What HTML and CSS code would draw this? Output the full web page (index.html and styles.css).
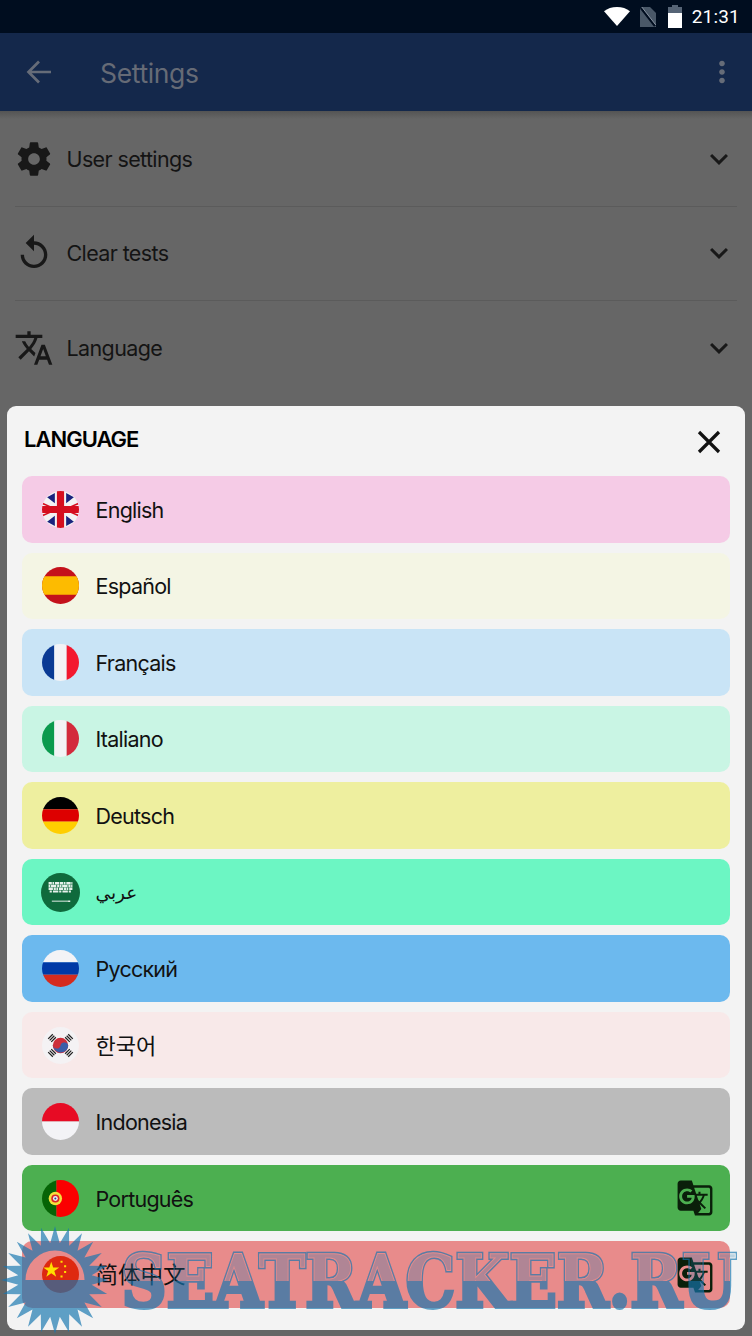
FILE: index.html
```html
<!DOCTYPE html>
<html lang="en">
<head>
<meta charset="UTF-8">
<meta name="viewport" content="width=device-width, initial-scale=1.0">
<title>Settings</title>
<link rel="stylesheet" href="styles.css">
</head>
<body>

<div class="statusbar">
  <svg class="st-wifi" viewBox="0 0 26 19"><path d="M13 19 0 4.200C3.400 1.600 8 0 13 0s9.600 1.600 13 4.200z"/></svg>
  <svg class="st-sim" viewBox="0 0 16 20"><path d="M2 0h8l6 6v14H0V2z" fill="#4a5868"/><path d="M1 1l14 18" stroke="#000d1f" stroke-width="2.400"/><path d="M1.800 0l14 18" stroke="#8994a2" stroke-width="1"/></svg>
  <svg class="st-batt" viewBox="0 0 14 23"><path d="M4 0h6v2h4v21H0V2h4z" fill="#566476"/><path d="M0 8h14v15H0z" fill="#fff"/></svg>
  <span class="st-time">21:31</span>
</div>

<div class="appbar">
  <svg class="ab-back" viewBox="0 0 24 24"><path d="M20 12H5M12 5l-7 7 7 7"/></svg>
  <span class="ab-title">Settings</span>
  <svg class="ab-more" viewBox="0 0 24 24"><path d="M12 8c1.100 0 2-.9 2-2s-.9-2-2-2-2 .9-2 2 .9 2 2 2zm0 2c-1.100 0-2 .9-2 2s.9 2 2 2 2-.9 2-2-.9-2-2-2zm0 6c-1.100 0-2 .9-2 2s.9 2 2 2 2-.9 2-2-.9-2-2-2z"/></svg>
</div>

<div class="settings">
  <div class="set-row">
    <svg class="set-icon" viewBox="0 0 24 24"><path d="M19.430 12.980c.04-.32.07-.64.07-.98s-.03-.66-.07-.98l2.110-1.650c.19-.15.24-.42.12-.64l-2-3.460c-.12-.22-.39-.3-.61-.22l-2.490 1c-.52-.4-1.080-.73-1.690-.98l-.38-2.650C14.460 2.180 14.250 2 14 2h-4c-.25 0-.46.18-.49.42l-.38 2.650c-.61.25-1.170.59-1.690.98l-2.490-1c-.23-.09-.49 0-.61.22l-2 3.460c-.13.22-.07.49.12.64l2.110 1.650c-.04.32-.07.65-.07.98s.03.66.07.98l-2.110 1.650c-.19.15-.24.42-.12.64l2 3.460c.12.22.39.3.61.22l2.490-1c.52.4 1.080.73 1.690.98l.38 2.650c.03.24.24.42.49.42h4c.25 0 .46-.18.49-.42l.38-2.650c.61-.25 1.170-.59 1.690-.98l2.490 1c.23.09.49 0 .61-.22l2-3.460c.12-.22.07-.49-.12-.64l-2.110-1.650zM12 15.500c-1.930 0-3.500-1.570-3.500-3.500s1.570-3.500 3.500-3.500 3.500 1.570 3.500 3.500-1.570 3.500-3.500 3.500z"/></svg>
    <span class="set-name">User settings</span>
    <svg class="set-chev" viewBox="0 0 24 24"><path d="M16.590 8.590 12 13.170 7.410 8.590 6 10l6 6 6-6z"/></svg>
  </div>
  <div class="set-row">
    <svg class="set-icon" viewBox="0 0 24 24"><path d="M12 5V1L7 6l5 5V7c3.310 0 6 2.690 6 6s-2.690 6-6 6-6-2.690-6-6H4c0 4.420 3.580 8 8 8s8-3.580 8-8-3.580-8-8-8z"/></svg>
    <span class="set-name">Clear tests</span>
    <svg class="set-chev" viewBox="0 0 24 24"><path d="M16.590 8.590 12 13.170 7.410 8.590 6 10l6 6 6-6z"/></svg>
  </div>
  <div class="set-row">
    <svg class="set-icon" viewBox="0 0 24 24"><path d="M12.870 15.070l-2.540-2.510.03-.03c1.740-1.940 2.980-4.170 3.710-6.530H17V4h-7V2H8v2H1v1.990h11.170C11.500 7.920 10.440 9.750 9 11.350 8.070 10.320 7.300 9.190 6.690 8h-2c.73 1.630 1.730 3.170 2.980 4.560l-5.090 5.020L4 19l5-5 3.110 3.110.76-2.040zM18.500 10h-2L12 22h2l1.120-3h4.750L21 22h2l-4.500-12zm-2.620 7l1.620-4.330L19.120 17h-3.240z"/></svg>
    <span class="set-name">Language</span>
    <svg class="set-chev" viewBox="0 0 24 24"><path d="M16.590 8.590 12 13.170 7.410 8.590 6 10l6 6 6-6z"/></svg>
  </div>
</div>

<div class="sheet">
  <div class="sheet-head">
    <span class="sheet-title">LANGUAGE</span>
    <svg class="sheet-close" viewBox="0 0 24 24"><path d="M2 2l20 20M22 2 2 22"/></svg>
  </div>

  <div class="lang-list">
    <div class="lang c-en">
      <svg class="flag" viewBox="0 0 36 36">
        <rect width="36" height="36" fill="#f3f3f3"/>
        <path d="M5 6l7.500 6V2zM31 6l-7.500 6V2zM5 30l7.500-6v10zM31 30l-7.500-6v10z" fill="#1a237e"/>
        <path d="M0 11l8 3.500H4.500L0 13zM36 25l-8-3.500h3.500L36 23zM0 25l8-3.500H4.500L0 23zM36 11l-8 3.500h3.500L36 13z" fill="#d50f1f"/>
        <path d="M14.500 0h7v14.500H36v7H21.500V36h-7V21.500H0v-7h14.500z" fill="#d50f1f"/>
      </svg>
      <span class="lang-name">English</span>
    </div>
    <div class="lang c-es">
      <svg class="flag" viewBox="0 0 36 36">
        <rect width="36" height="36" fill="#c4111b"/>
        <rect y="9" width="36" height="18" fill="#fdbb00"/>
      </svg>
      <span class="lang-name">Español</span>
    </div>
    <div class="lang c-fr">
      <svg class="flag" viewBox="0 0 36 36">
        <rect width="12" height="36" fill="#0a3a94"/>
        <rect x="12" width="12" height="36" fill="#f3f3f6"/>
        <rect x="24" width="12" height="36" fill="#f3182e"/>
      </svg>
      <span class="lang-name">Français</span>
    </div>
    <div class="lang c-it">
      <svg class="flag" viewBox="0 0 36 36">
        <rect width="12" height="36" fill="#0b9a4e"/>
        <rect x="12" width="12" height="36" fill="#f3f3f6"/>
        <rect x="24" width="12" height="36" fill="#d32a3c"/>
      </svg>
      <span class="lang-name">Italiano</span>
    </div>
    <div class="lang c-de">
      <svg class="flag" viewBox="0 0 36 36">
        <rect width="36" height="12" fill="#000"/>
        <rect y="12" width="36" height="12" fill="#dd0000"/>
        <rect y="24" width="36" height="12" fill="#ffce00"/>
      </svg>
      <span class="lang-name">Deutsch</span>
    </div>
    <div class="lang c-ar">
      <svg class="flag flag-big" viewBox="0 0 36 36">
        <rect width="36" height="36" fill="#0f6a3c"/>
        <path d="M7 9.500h22" stroke="#e6f0ea" stroke-width="2.400" stroke-dasharray="3 .6 1.500 .8 4 .6"/>
        <path d="M7 12h22" stroke="#e6f0ea" stroke-width="2.400" stroke-dasharray="1.500 .6 5 .8 2 .5"/>
        <path d="M7 14.500h22" stroke="#e6f0ea" stroke-width="2.400" stroke-dasharray="4 .7 2 .5 1.500 .8"/>
        <path d="M8 17h20" stroke="#e6f0ea" stroke-width="1.800" stroke-dasharray="2 1 5 .8"/>
        <path d="M10 26h15" stroke="#e6f0ea" stroke-width=".9"/>
        <path d="M25 25.300h2v1.400h-2z" fill="#e6f0ea"/>
      </svg>
      <span class="lang-name lang-name-ar">عربي</span>
    </div>
    <div class="lang c-ru">
      <svg class="flag" viewBox="0 0 36 36">
        <rect width="36" height="12" fill="#f3f3f6"/>
        <rect y="12" width="36" height="12" fill="#0039a6"/>
        <rect y="24" width="36" height="12" fill="#d52b1e"/>
      </svg>
      <span class="lang-name">Русский</span>
    </div>
    <div class="lang c-ko">
      <svg class="flag" viewBox="0 0 36 36">
        <rect width="36" height="36" fill="#f4f2f4"/>
        <circle cx="18" cy="18" r="7.500" fill="#cd2e3a"/>
        <path d="M10.700 16.400a3.700 3.700 0 0 0 7.300 1.600 3.700 3.700 0 0 1 7.300 1.600A7.500 7.500 0 0 1 10.700 16.400z" fill="#3b5ea8"/>
        <path d="M6 11.500l4.500-4.500M7.500 13 12 8.500M9 14.500l4.500-4.500M25.500 7l4.500 4.500M24 8.500l4.500 4.500M22.500 10l4.500 4.500M6 24.500l4.500 4.500M7.500 23l4.500 4.500M9 21.500l4.500 4.500M25.500 29l4.500-4.500M24 27.500l4.500-4.500M22.500 26l4.500-4.500" stroke="#222" stroke-width="1.200"/>
      </svg>
      <span class="lang-name lang-name-cjk">한국어</span>
    </div>
    <div class="lang c-id">
      <svg class="flag" viewBox="0 0 36 36">
        <rect width="36" height="18" fill="#e70b24"/>
        <rect y="18" width="36" height="18" fill="#f3f3f6"/>
      </svg>
      <span class="lang-name">Indonesia</span>
    </div>
    <div class="lang c-pt">
      <svg class="flag" viewBox="0 0 36 36">
        <rect width="14" height="36" fill="#066406"/>
        <rect x="14" width="22" height="36" fill="#fb0000"/>
        <circle cx="13" cy="18" r="6.500" fill="#f4e13c"/>
        <circle cx="13" cy="18" r="4" fill="#d8232a"/>
        <circle cx="13" cy="18" r="2.400" fill="#f0f0f0"/>
        <circle cx="13" cy="18" r="1" fill="#27409a"/>
      </svg>
      <span class="lang-name">Português</span>
      <svg class="lang-gt" viewBox="0 0 24 24"><path d="M21 4H11l-1-3H3c-1.100 0-2 .9-2 2v15c0 1.100.9 2 2 2h8l1 3h9c1.100 0 2-.9 2-2V6c0-1.100-.9-2-2-2zM7 16c-2.760 0-5-2.240-5-5s2.240-5 5-5c1.350 0 2.480.5 3.350 1.300L9.030 8.570c-.38-.36-1.040-.78-2.030-.78-1.740 0-3.150 1.440-3.150 3.210S5.260 14.210 7 14.210c2.010 0 2.840-1.440 2.920-2.410H7v-1.710h4.680c.07.31.12.61.12 1.020C11.800 13.970 9.890 16 7 16zm6.170-5.420h3.700c-.43 1.250-1.110 2.430-2.050 3.470-.31-.35-.6-.72-.86-1.100l-.79-2.370zm8.330 9.920c0 .55-.45 1-1 1H14l2-2.500-1.040-3.100 3.100 3.100.92-.92-3.300-3.250.02-.02c1.130-1.250 1.930-2.690 2.400-4.220H20v-1.300h-4.530V8h-1.290v1.290h-1.440L11.460 5.500h9.040c.55 0 1 .45 1 1v14z"/></svg>
    </div>
    <div class="lang c-zh">
      <svg class="flag" viewBox="0 0 36 36">
        <rect width="36" height="36" fill="#de2910"/>
        <path d="M9 5.500l1.900 5.600h5.900l-4.800 3.500 1.800 5.600L9 16.800l-4.800 3.400L6 14.600l-4.800-3.500h5.900z" fill="#ffde00"/>
        <path d="M18 4.500h2v2h-2zM21.500 9h2v2h-2zM21.500 14.500h2v2h-2zM18 19h2v2h-2z" fill="#ffde00"/>
      </svg>
      <span class="lang-name lang-name-cjk lang-name-zh">简体中文</span>
      <svg class="lang-gt" viewBox="0 0 24 24"><path d="M21 4H11l-1-3H3c-1.100 0-2 .9-2 2v15c0 1.100.9 2 2 2h8l1 3h9c1.100 0 2-.9 2-2V6c0-1.100-.9-2-2-2zM7 16c-2.760 0-5-2.240-5-5s2.240-5 5-5c1.350 0 2.480.5 3.350 1.300L9.030 8.570c-.38-.36-1.040-.78-2.030-.78-1.740 0-3.150 1.440-3.150 3.210S5.260 14.210 7 14.210c2.010 0 2.840-1.440 2.920-2.410H7v-1.710h4.680c.07.31.12.61.12 1.020C11.800 13.970 9.890 16 7 16zm6.170-5.420h3.700c-.43 1.250-1.110 2.430-2.050 3.470-.31-.35-.6-.72-.86-1.100l-.79-2.370zm8.330 9.920c0 .55-.45 1-1 1H14l2-2.500-1.040-3.100 3.100 3.100.92-.92-3.300-3.250.02-.02c1.130-1.250 1.930-2.690 2.400-4.220H20v-1.300h-4.530V8h-1.290v1.290h-1.440L11.460 5.500h9.040c.55 0 1 .45 1 1v14z"/></svg>
    </div>
  </div>
</div>

<div class="watermark">
  <svg class="wm-sun" viewBox="0 0 110 110"><path fill-rule="evenodd" d="M109 55 91.700 50.200 107.200 41 89.200 40.800 101.800 28 84.400 32.500 93.200 16.800 77.500 25.700 82 8.200 69.200 20.800 69 2.800 59.800 18.300 55 1 50.200 18.300 41 2.800 40.800 20.800 28 8.200 32.500 25.700 16.800 16.800 25.600 32.500 8.200 28 20.800 40.800 2.800 41 18.300 50.200 1 55 18.300 59.800 2.800 69 20.800 69.200 8.200 82 25.600 77.500 16.800 93.200 32.500 84.400 28 101.800 40.800 89.200 41 107.200 50.200 91.700 55 109 59.800 91.700 69 107.200 69.200 89.200 82 101.800 77.500 84.400 93.200 93.200 84.400 77.500 101.800 82 89.200 69.200 107.200 69 91.700 59.800zM25.500 55a29.500 29.500 0 0 1 59 0z"/></svg>
  <svg class="wm-word" viewBox="0 0 634 111">
    <defs>
      <clipPath id="wm-bottom"><rect y="56" width="634" height="55"/></clipPath>
      <clipPath id="wm-top"><rect width="634" height="56"/></clipPath>
      <mask id="wm-ring" maskUnits="userSpaceOnUse" x="0" y="0" width="634" height="111">
        <use href="#wm-label" fill="#fff" stroke="#fff" stroke-width="4"/>
        <use href="#wm-label" fill="#000" stroke="#000" stroke-width="1"/>
      </mask>
    </defs>
    <g clip-path="url(#wm-bottom)" stroke="#1676b0" stroke-width="4">
      <text id="wm-label" class="wm-label" x="3.500" y="82" textLength="615" lengthAdjust="spacingAndGlyphs">SEATRACKER.RU</text>
    </g>
    <g clip-path="url(#wm-top)"><rect width="634" height="111" fill="#1676b0" mask="url(#wm-ring)"/></g>
  </svg>
</div>

</body>
</html>
```

FILE: styles.css
```css
:root {
  --dim:#666; --ink:#141414; --sheet:#f3f3f3; --bar:#14284b;
}
html,body{height:100%}
body{margin:0;position:relative;overflow:hidden;background:var(--dim);font-family:Inter,"Noto Sans CJK SC",sans-serif;color:var(--ink)}

.statusbar{height:33px;background:#000d1f;display:flex;align-items:center;justify-content:flex-end;padding-right:12px;box-sizing:border-box}
.st-wifi{width:26px;height:19px;fill:#fff;margin-right:10px}
.st-sim{width:16px;height:20px;margin-right:12px}
.st-batt{width:14px;height:23px;margin-right:10px}
.st-time{font-family:Roboto,sans-serif;font-size:19px;color:#fff;letter-spacing:.2px}

.appbar{height:78px;background:var(--bar);display:flex;align-items:center;padding:0 13px 0 21px;box-sizing:border-box}
.ab-back{width:36px;height:36px;fill:none;stroke:#666c78;stroke-width:1.800;margin-right:43px}
.ab-title{flex:1;font-size:26.500px;color:#666b76;letter-spacing:-.35px;padding-top:2px}
.ab-more{width:34px;height:34px;fill:#666c78}

.settings{padding:1px 15px 0;background:linear-gradient(#545454,var(--dim) 8px) no-repeat}
.set-row{height:94.500px;display:flex;align-items:center;border-bottom:1px solid #5b5b5b;box-sizing:border-box}
.set-row:last-child{border-bottom:none}
.set-icon{width:40px;height:40px;fill:#181818;margin-left:-1px;flex:none}
.set-name{flex:1;font-size:21.500px;margin-left:12.500px;letter-spacing:-.62px}
.set-chev{width:36px;height:36px;fill:#181818;margin-right:0}

.sheet{position:absolute;left:7px;right:7px;top:406px;bottom:6px;background:var(--sheet);border-radius:9px;padding:0 15px;box-sizing:border-box}
.sheet-head{height:70px;display:flex;align-items:center;justify-content:space-between;padding:0 9px 4px 2px;box-sizing:border-box}
.sheet-title{font-size:22px;font-weight:600;color:#000;letter-spacing:-1px}
.sheet-close{width:24px;height:24px;fill:none;stroke:#111;stroke-width:3.200;margin-top:6px}

.lang-list{display:flex;flex-direction:column;gap:10px}
.lang{height:66.550px;flex:none;border-radius:10px;display:flex;align-items:center;padding:0 16px 0 19.500px;box-sizing:border-box}
.flag{width:37px;height:37px;border-radius:50%;flex:none}
.flag-big{width:39px;height:39px;margin:0 -1px}
.lang-name{flex:1;font-size:21.500px;margin-left:17px;padding-top:1px;color:#111;letter-spacing:-.75px}
.lang-name-ar{font-family:"DejaVu Sans",sans-serif;font-size:18.500px;letter-spacing:0}
.lang-name-cjk{font-size:22px;letter-spacing:0;padding-top:0;padding-bottom:3px}
.lang-name-zh{font-size:22.500px}
.lang-gt{width:38px;height:38px;fill:#0a1f0a;flex:none}

.c-en{background:#f5cbe6}
.c-es{background:#f4f5e4}
.c-fr{background:#c9e4f6}
.c-it{background:#c9f5e4}
.c-de{background:#eeef9f}
.c-ar{background:#6cf6c3}
.c-ru{background:#6cb9ee}
.c-ko{background:#f8e9e9}
.c-id{background:#bbb}
.c-pt{background:#4caf50}
.c-zh{background:#e88b8b}

/* site stamp laid over the bottom of the sheet */
.watermark{position:absolute;left:0;top:1225px;width:752px;height:111px;opacity:.67;pointer-events:none}
.wm-sun{position:absolute;left:0;top:0;width:110px;height:110px;fill:#1676b0}
.wm-word{position:absolute;left:118px;top:0;width:634px;height:111px}
.wm-label{font-family:"DejaVu Serif",serif;font-weight:700;font-size:72px;fill:#1676b0}
```
